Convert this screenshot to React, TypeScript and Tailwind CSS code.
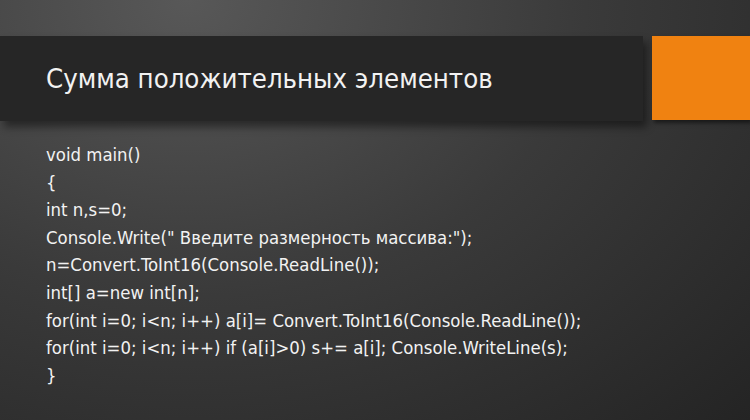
const lines = [
  'void main()',
  '{',
  'int n,s=0;',
  'Console.Write(" Введите размерность массива:");',
  'n=Convert.ToInt16(Console.ReadLine());',
  'int[] a=new int[n];',
  'for(int i=0; i<n; i++) a[i]= Convert.ToInt16(Console.ReadLine());',
  'for(int i=0; i<n; i++) if (a[i]>0) s+= a[i]; Console.WriteLine(s);',
  '}',
];

const App = () => {
  return (
    <div className="w-[750px] h-[420px] overflow-hidden bg-[radial-gradient(ellipse_at_25%_0%,#585858_0%,#3a3a3a_50%,#242424_100%)] font-['DejaVu_Sans_Condensed',sans-serif] text-[#f2f2f2]">
      <div className="flex pt-[36px] gap-[9px]">
        <div className="w-[643px] h-[85px] bg-[#262626] shadow-[4px_6px_8px_rgba(0,0,0,0.45)] flex items-center pl-[46px]">
          <h1 className="text-[27.3px] leading-none">Сумма положительных элементов</h1>
        </div>
        <div className="flex-1 h-[84px] bg-[#f08211] shadow-[2px_3px_4px_rgba(0,0,0,0.5)]" />
      </div>

      <div className="pl-[46px] pt-[20px] flex flex-col text-[18.4px] leading-[27.6px]">
        {lines.map((line, i) => (
          <div key={i} className="whitespace-pre">
            {line}
          </div>
        ))}
      </div>
    </div>
  );
};

export default App;
